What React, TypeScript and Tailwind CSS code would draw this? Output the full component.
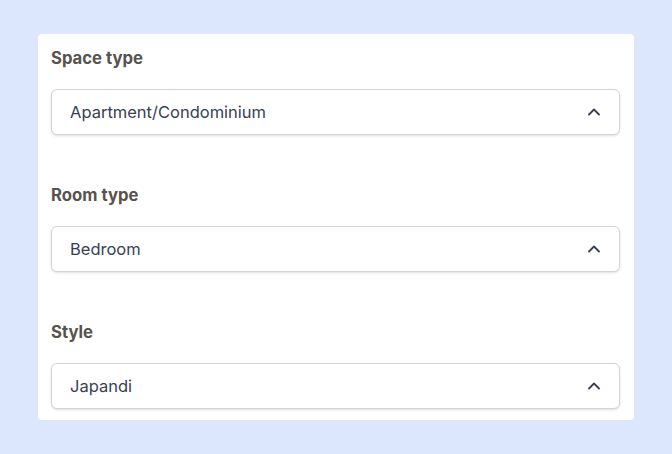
import React from "react";

const fields = [
  { label: "Space type", value: "Apartment/Condominium" },
  { label: "Room type", value: "Bedroom" },
  { label: "Style", value: "Japandi" },
];

const ChevronUp = () => (
  <svg width="12" height="8" viewBox="0 0 12 8" fill="none" stroke="#374151" strokeWidth="1.8" strokeLinecap="round" strokeLinejoin="round">
    <path d="M1 6.5L6 1.5L11 6.5" />
  </svg>
);

const SelectField = ({ label, value }: { label: string; value: string }) => (
  <div className="flex flex-col">
    <h3 className="text-[16.7px] leading-6 font-bold text-[#57534e]">{label}</h3>
    <button className="mt-[19px] h-[46px] w-full flex items-center justify-between rounded-md border border-[#d4d4d8] bg-white pl-[18px] pr-[19px] shadow-sm">
      <span className="text-[16.5px] text-[#374151]">{value}</span>
      <ChevronUp />
    </button>
  </div>
);

const App = () => {
  return (
    <div className="min-h-[454px] w-full bg-[#dce7fe] pt-[34px] px-[38px] font-['Inter',sans-serif]">
      <div className="flex flex-col gap-[48px] rounded-sm bg-white pt-3 pb-[11px] pl-[13px] pr-[14px]">
        {fields.map((f) => (
          <SelectField key={f.label} label={f.label} value={f.value} />
        ))}
      </div>
    </div>
  );
};

export default App;
